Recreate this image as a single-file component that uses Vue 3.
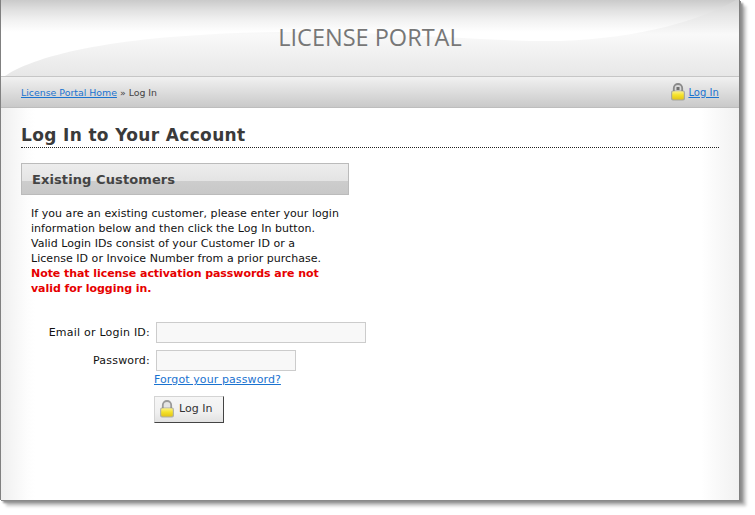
<script setup>
const intro = [
  'If you are an existing customer, please enter your login',
  'information below and then click the Log In button.',
  'Valid Login IDs consist of your Customer ID or a',
  'License ID or Invoice Number from a prior purchase.'
]
const note = ['Note that license activation passwords are not', 'valid for logging in.']
</script>

<template>
  <div class="page">
    <div class="window">
      <header class="masthead">
        <svg class="swoosh" viewBox="0 0 738 76" width="738" height="76" aria-hidden="true">
          <defs>
            <linearGradient id="top" gradientUnits="userSpaceOnUse" x1="0" y1="0" x2="0" y2="76">
              <stop offset="0" stop-color="#cacaca" />
              <stop offset="0.13" stop-color="#e0e0e0" />
              <stop offset="0.27" stop-color="#f2f2f2" />
              <stop offset="0.42" stop-color="#ffffff" />
              <stop offset="1" stop-color="#ffffff" />
            </linearGradient>
            <linearGradient id="low" gradientUnits="userSpaceOnUse" x1="0" y1="0" x2="0" y2="76">
              <stop offset="0" stop-color="#d2d2d2" />
              <stop offset="0.2" stop-color="#e6e6e6" />
              <stop offset="0.45" stop-color="#f9f9f9" />
              <stop offset="1" stop-color="#e7e7e7" />
            </linearGradient>
            <linearGradient id="brass" x1="0" y1="0" x2="0" y2="1">
              <stop offset="0" stop-color="#fbf08a" />
              <stop offset="0.45" stop-color="#f5e32a" />
              <stop offset="1" stop-color="#e2c41a" />
            </linearGradient>
          </defs>
          <rect width="738" height="76" fill="url(#top)" />
          <path d="M4 76 C40 52 130 34 280 32 C400 31 480 42 560 41 C640 38 700 20 735 0 L738 0 L738 76 Z" fill="url(#low)" />
        </svg>
        <h1 class="brand">LICENSE PORTAL</h1>
      </header>

      <nav class="crumbs">
        <div class="trail"><a href="#">License Portal Home</a> » Log In</div>
        <div class="account">
          <svg class="lock" viewBox="0 0 16 18" width="16" height="18" aria-hidden="true">
            <path d="M3.8 9V5.2a4.2 4.2 0 0 1 8.4 0V9" fill="#d8d8d8" stroke="#8a8a8a" stroke-width="1.8" />
            <rect x="6.5" y="4" width="3" height="3" fill="#6f6f6f" />
            <rect x="1" y="7.5" width="14" height="10" rx="2" fill="#8a8a7a" opacity=".6" />
            <rect x="2.2" y="8.3" width="11.6" height="8.2" rx="1.4" fill="url(#brass)" />
          </svg>
          <a href="#">Log In</a>
        </div>
      </nav>

      <main class="content">
        <h2 class="title">Log In to Your Account</h2>

        <section class="panel">
          <h3 class="panel-head">Existing Customers</h3>
          <p class="intro">
            <span v-for="line in intro" :key="line" class="line">{{ line }}</span>
            <strong v-for="line in note" :key="line" class="line note">{{ line }}</strong>
          </p>
        </section>

        <form class="form" @submit.prevent>
          <label class="label" for="login">Email or Login ID:</label>
          <input id="login" class="field wide" type="text" />
          <label class="label" for="pass">Password:</label>
          <div class="pass-col">
            <input id="pass" class="field narrow" type="password" />
            <a class="forgot" href="#">Forgot your password?</a>
            <button class="submit" type="submit">
              <svg class="lock" viewBox="0 0 16 18" width="16" height="18" aria-hidden="true">
                <path d="M3.8 9V5.2a4.2 4.2 0 0 1 8.4 0V9" fill="#e4e4e4" stroke="#9a9a9a" stroke-width="1.8" />
                <rect x="1" y="7.5" width="14" height="10" rx="2" fill="#8a8a7a" opacity=".6" />
                <rect x="2.2" y="8.3" width="11.6" height="8.2" rx="1.4" fill="url(#brass)" />
              </svg>
              <span>Log In</span>
            </button>
          </div>
        </form>
      </main>
    </div>
  </div>
</template>

<style>
html, body { margin: 0; background: #fff; }
</style>

<style scoped>
.page {
  box-sizing: border-box;
  height: 515px;
  padding-bottom: 15px;
}
.window {
  box-sizing: border-box;
  width: 740px;
  height: 500px;
  border-left: 1px solid #808080;
  border-right: 1px solid #808080;
  box-shadow: 1px 1px 0 #8a8a8a, 3px 3px 2px #8f8f8f, 6px 6px 3px #c4c4c4;
  font-family: "DejaVu Sans", Verdana, sans-serif;
  font-size: 11px;
  letter-spacing: 0.04px;
  color: #111;
  background: linear-gradient(90deg, #efefef 0, #fdfdfd 26px, #fff 34px, #fff 700px, #f1f1f1 738px);
  overflow: hidden;
}
.masthead {
  position: relative;
  height: 76px;
  box-sizing: border-box;
  display: flex;
  justify-content: center;
  background: #fff;
}
.swoosh { position: absolute; left: 0; top: 0; }
.brand {
  position: relative;
  margin: 0;
  padding-top: 23px;
  font: 400 23.5px/28px "Open Sans", "DejaVu Sans", sans-serif;
  letter-spacing: 0;
  color: #777;
}
.crumbs {
  box-sizing: border-box;
  height: 32px;
  padding: 0 20px;
  display: flex;
  align-items: center;
  justify-content: space-between;
  background: linear-gradient(#f1f1f1, #c9c9c9);
  border-top: 1px solid #c6c6c6;
  border-bottom: 1px solid #bdbdbd;
  font-size: 10px;
  color: #333;
}
.trail { font-size: 9.4px; letter-spacing: 0; color: #444; }
a { color: #1a73d0; }
.account { display: flex; align-items: center; gap: 2px; }
.lock { flex: none; }
.content { padding: 17px 20px 0; }
.title {
  margin: 0;
  height: 21px;
  font-size: 17px;
  line-height: 21px;
  font-weight: 700;
  color: #3a3a3a;
  border-bottom: 1px dotted #222;
  padding-bottom: 1px;
  letter-spacing: 0.35px;
}
.panel { width: 328px; margin-top: 15px; }
.panel-head {
  box-sizing: border-box;
  margin: 0;
  height: 32px;
  padding-left: 10px;
  font-size: 13px;
  line-height: 31px;
  font-weight: 700;
  letter-spacing: 0.1px;
  color: #444;
  border: 1px solid #bbb;
  background: linear-gradient(#ededed, #e4e4e4 55%, #cdcdcd 55%, #c8c8c8);
}
.intro { margin: 11px 0 0 10px; line-height: 15px; white-space: nowrap; }
.line { display: block; }
.note { color: #e60000; letter-spacing: -0.06px; }
.form {
  display: grid;
  grid-template-columns: 129px auto;
  justify-content: start;
  column-gap: 6px;
  row-gap: 7px;
  margin-top: 26px;
}
.label { text-align: right; line-height: 21px; letter-spacing: 0.22px; }
.field {
  box-sizing: border-box;
  height: 21px;
  border: 1px solid #ccc;
  background: #f8f8f8;
  padding: 0 3px;
  outline: none;
}
.wide { width: 210px; }
.narrow { width: 140px; display: block; }
.pass-col { display: flex; flex-direction: column; align-items: flex-start; }
.forgot { margin: 1px 0 0 -2px; line-height: 15px; letter-spacing: 0.1px; }
.submit {
  box-sizing: border-box;
  margin: 9px 0 0 -2px;
  width: 70px;
  height: 27px;
  padding: 0 0 2px 4px;
  display: flex;
  align-items: center;
  gap: 4px;
  font: inherit;
  letter-spacing: inherit;
  color: #333;
  border: 1px solid #d4d4d4;
  border-right-color: #444;
  border-bottom-color: #444;
  background: linear-gradient(#f6f6f6, #f0f0f0 60%, #e2e2e2);
}
</style>
